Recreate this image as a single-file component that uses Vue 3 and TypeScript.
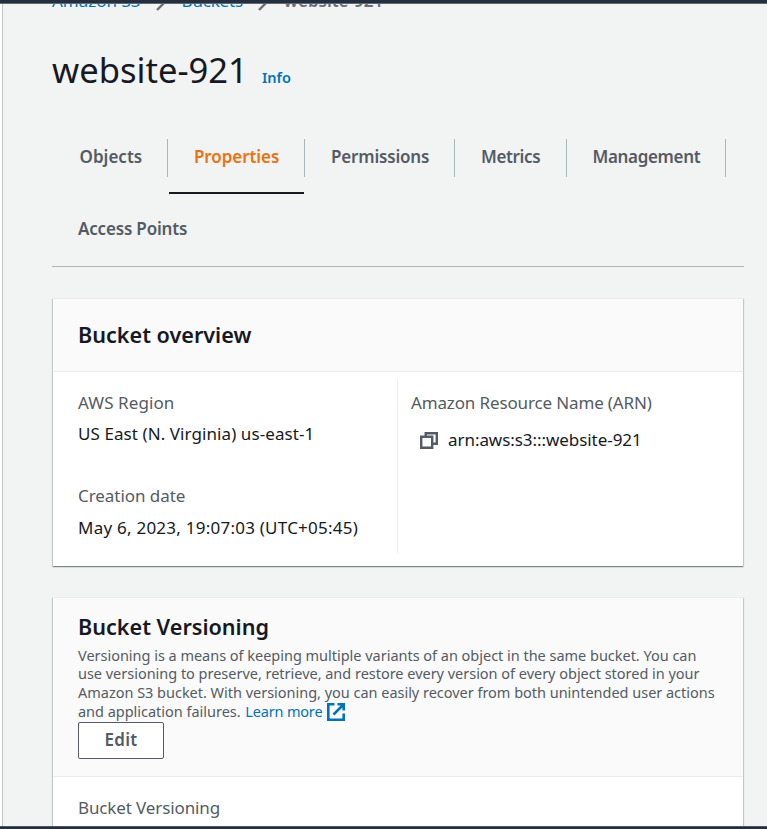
<script setup lang="ts">
interface Tab {
  key: string
  label: string
  active?: boolean
}

const tabs: Tab[] = [
  { key: 'objects', label: 'Objects' },
  { key: 'properties', label: 'Properties', active: true },
  { key: 'permissions', label: 'Permissions' },
  { key: 'metrics', label: 'Metrics' },
  { key: 'management', label: 'Management' },
  { key: 'access', label: 'Access Points' },
]
</script>

<template>
  <div class="shell">
    <div class="topbar"></div>
    <div class="body">
      <aside class="rail"></aside>
      <main class="main">
        <nav class="crumbs">
          <a class="crumb-s3">Amazon S3</a>
          <svg class="chev" viewBox="0 0 16 16"><path d="M3 -2l9 9-9 9" /></svg>
          <a class="crumb-buckets">Buckets</a>
          <svg class="chev" viewBox="0 0 16 16"><path d="M3 -2l9 9-9 9" /></svg>
          <b>website-921</b>
        </nav>

        <header class="title">
          <h1>website-921</h1>
          <a class="info">Info</a>
        </header>

        <ul class="tabs">
          <li v-for="t in tabs" :key="t.key" class="tab" :class="[t.key, { active: t.active }]">
            <span class="label">{{ t.label }}</span>
          </li>
        </ul>

        <section class="card overview">
          <div class="card-head"><h2>Bucket overview</h2></div>
          <div class="cols">
            <div class="col">
              <div class="key region-key">AWS Region</div>
              <div class="val region">US East (N. Virginia) us-east-1</div>
              <div class="key created-key">Creation date</div>
              <div class="val created">May 6, 2023, 19:07:03 (UTC+05:45)</div>
            </div>
            <div class="col right">
              <div class="key arn-key">Amazon Resource Name (ARN)</div>
              <div class="val arn">
                <svg class="copy" viewBox="0 0 18 18">
                  <path d="M1.2 5.8h11v11h-11zM5.7 5.8V2.2h11.1v10.6h-4.1" />
                </svg>
                <span>arn:aws:s3:::website-921</span>
              </div>
            </div>
          </div>
        </section>

        <section class="card versioning">
          <div class="card-head">
            <h2>Bucket Versioning</h2>
            <p class="desc">
              Versioning is a means of keeping multiple variants of an object in the same bucket. You can<br />
              use versioning to preserve, retrieve, and restore every version of every object stored in your<br />
              Amazon S3 bucket. With versioning, you can easily recover from both unintended user actions<br />
              and application failures. <a class="more">Learn more<svg class="ext" viewBox="0 0 18 18">
                <path d="M7.5 1.3H1.3v15.4h15.4v-6.2M10.5 1.3h6.2v6.2M16.7 1.3L6.5 11.5" />
              </svg></a>
            </p>
            <button class="edit" type="button">Edit</button>
          </div>
          <div class="key versioning-key">Bucket Versioning</div>
        </section>
      </main>
    </div>
    <div class="bottombar"></div>
  </div>
</template>

<style>
body {
  margin: 0;
  overflow: hidden;
}
</style>

<style scoped>
.shell {
  display: flex;
  flex-direction: column;
  height: 829px;
  overflow: hidden;
  background: #f2f3f3;
  color: #16191f;
  font-family: "Noto Sans", sans-serif;
  font-size: 17px;
  line-height: 24px;
  white-space: nowrap;
}
.topbar {
  flex: none;
  height: 3px;
  background: #232f3e;
  border-bottom: 1px solid #5f6973;
}
.bottombar {
  flex: none;
  height: 2px;
  background: #232f3e;
  border-top: 1px solid #4b5564;
}
.body {
  display: flex;
  flex: 1;
  min-height: 0;
  overflow: hidden;
}
.rail {
  flex: none;
  width: 2px;
  background: #fff;
  border-right: 1px solid #c0c6c6;
}
.main {
  flex: 1;
  padding: 0 23px 0 49px;
}
.crumbs {
  display: flex;
  align-items: center;
  height: 24px;
  margin-top: -15px;
}
.crumbs a,
.info,
.more {
  color: #0073bb;
}
.crumbs b {
  color: #687078;
  font-weight: 600;
}
.crumb-buckets {
  letter-spacing: -0.2px;
}
.chev {
  width: 16px;
  height: 16px;
  margin: 2px 12px 0 13px;
  overflow: visible;
  fill: none;
  stroke: #687078;
  stroke-width: 2.4;
}
.title {
  display: flex;
  align-items: baseline;
  gap: 14px;
  height: 44px;
  margin-top: 35px;
}
h1 {
  margin: 0;
  font-size: 34.6px;
  font-weight: 400;
  line-height: 44px;
}
.info {
  font-size: 14.5px;
  font-weight: 600;
}
.tabs {
  display: flex;
  flex-wrap: wrap;
  row-gap: 17px;
  height: 127px;
  margin: 47px 0 0;
  padding: 0 0 0 1px;
  align-content: flex-start;
  border-bottom: 1px solid #aab7b8;
  list-style: none;
}
.tab {
  box-sizing: border-box;
  height: 55px;
  color: #545b64;
  font-weight: 600;
}
.label {
  display: block;
  box-sizing: border-box;
  height: 38px;
  padding-left: 26px;
  border-right: 1px solid #aab7b8;
  line-height: 35px;
}
.objects { width: 115px; }
.properties { width: 137px; letter-spacing: -0.08px; }
.permissions { width: 150px; letter-spacing: -0.18px; }
.metrics { width: 112px; letter-spacing: -0.35px; }
.management { width: 159px; letter-spacing: -0.34px; }
.access { width: 160px; letter-spacing: -0.18px; }
.objects .label {
  padding-left: 26.6px;
}
.management .label {
  padding-left: 25.5px;
}
.access .label {
  padding-left: 25px;
  border-right: 0;
}
.tab.active {
  color: #ec7211;
}
.active::after {
  content: "";
  display: block;
  height: 2px;
  margin: 15px 1px 0;
  background: #16191f;
}
.card {
  margin: 0 1px;
  border-top: 1px solid #eaeded;
  background: #fff;
  box-shadow:
    0 1px 1px 0 rgba(0, 28, 36, 0.3),
    1px 1px 1px 0 rgba(0, 28, 36, 0.15),
    -1px 1px 1px 0 rgba(0, 28, 36, 0.15);
}
.overview {
  height: 267px;
  margin-top: 31px;
}
.versioning {
  height: 300px;
  margin-top: 31px;
}
.card-head {
  box-sizing: border-box;
  padding: 0 25px;
  border-bottom: 1px solid #eaeded;
  background: #fafafa;
}
.overview .card-head {
  height: 73px;
  padding-top: 21px;
}
.versioning .card-head {
  height: 179px;
  padding-top: 14px;
}
h2 {
  margin: 0;
  font-size: 21.6px;
  font-weight: 600;
  line-height: 30px;
}
.cols {
  display: flex;
  padding-top: 7px;
}
.col {
  box-sizing: border-box;
  width: 344px;
  height: 174px;
  padding: 12px 0 0 25px;
}
.right {
  padding-left: 13px;
  border-left: 1px solid #eaeded;
}
.key {
  color: #545b64;
}
.val {
  margin-top: 7px;
}
.region-key {
  letter-spacing: 0.08px;
}
.region {
  letter-spacing: 0.08px;
}
.created-key {
  margin-top: 38px;
  letter-spacing: -0.05px;
}
.created {
  margin-top: 8px;
  letter-spacing: 0.24px;
}
.arn-key {
  letter-spacing: -0.14px;
}
.arn {
  display: flex;
  align-items: center;
  gap: 10px;
  margin-top: 13px;
  padding-left: 9px;
  letter-spacing: -0.06px;
}
.copy,
.ext {
  width: 18px;
  height: 18px;
  fill: none;
  stroke: #545b64;
  stroke-width: 2.4;
}
.desc {
  margin: 3.6px 0 1.4px;
  color: #545b64;
  font-size: 14.5px;
  line-height: 18.75px;
  letter-spacing: -0.02px;
}
.more {
  margin-left: 1px;
  letter-spacing: -0.18px;
}
.ext {
  margin: -3px 0 -4px 5px;
  stroke: #0073bb;
  stroke-width: 2.6;
  vertical-align: baseline;
}
.edit {
  display: block;
  box-sizing: border-box;
  width: 86px;
  height: 37px;
  margin: 0;
  padding: 0;
  border: 1px solid #545b64;
  border-radius: 2px;
  background: #fff;
  color: #545b64;
  font: 600 17px/34px "Noto Sans", sans-serif;
  letter-spacing: 0.3px;
}
.versioning-key {
  padding: 19px 25px;
  letter-spacing: -0.12px;
}
</style>
